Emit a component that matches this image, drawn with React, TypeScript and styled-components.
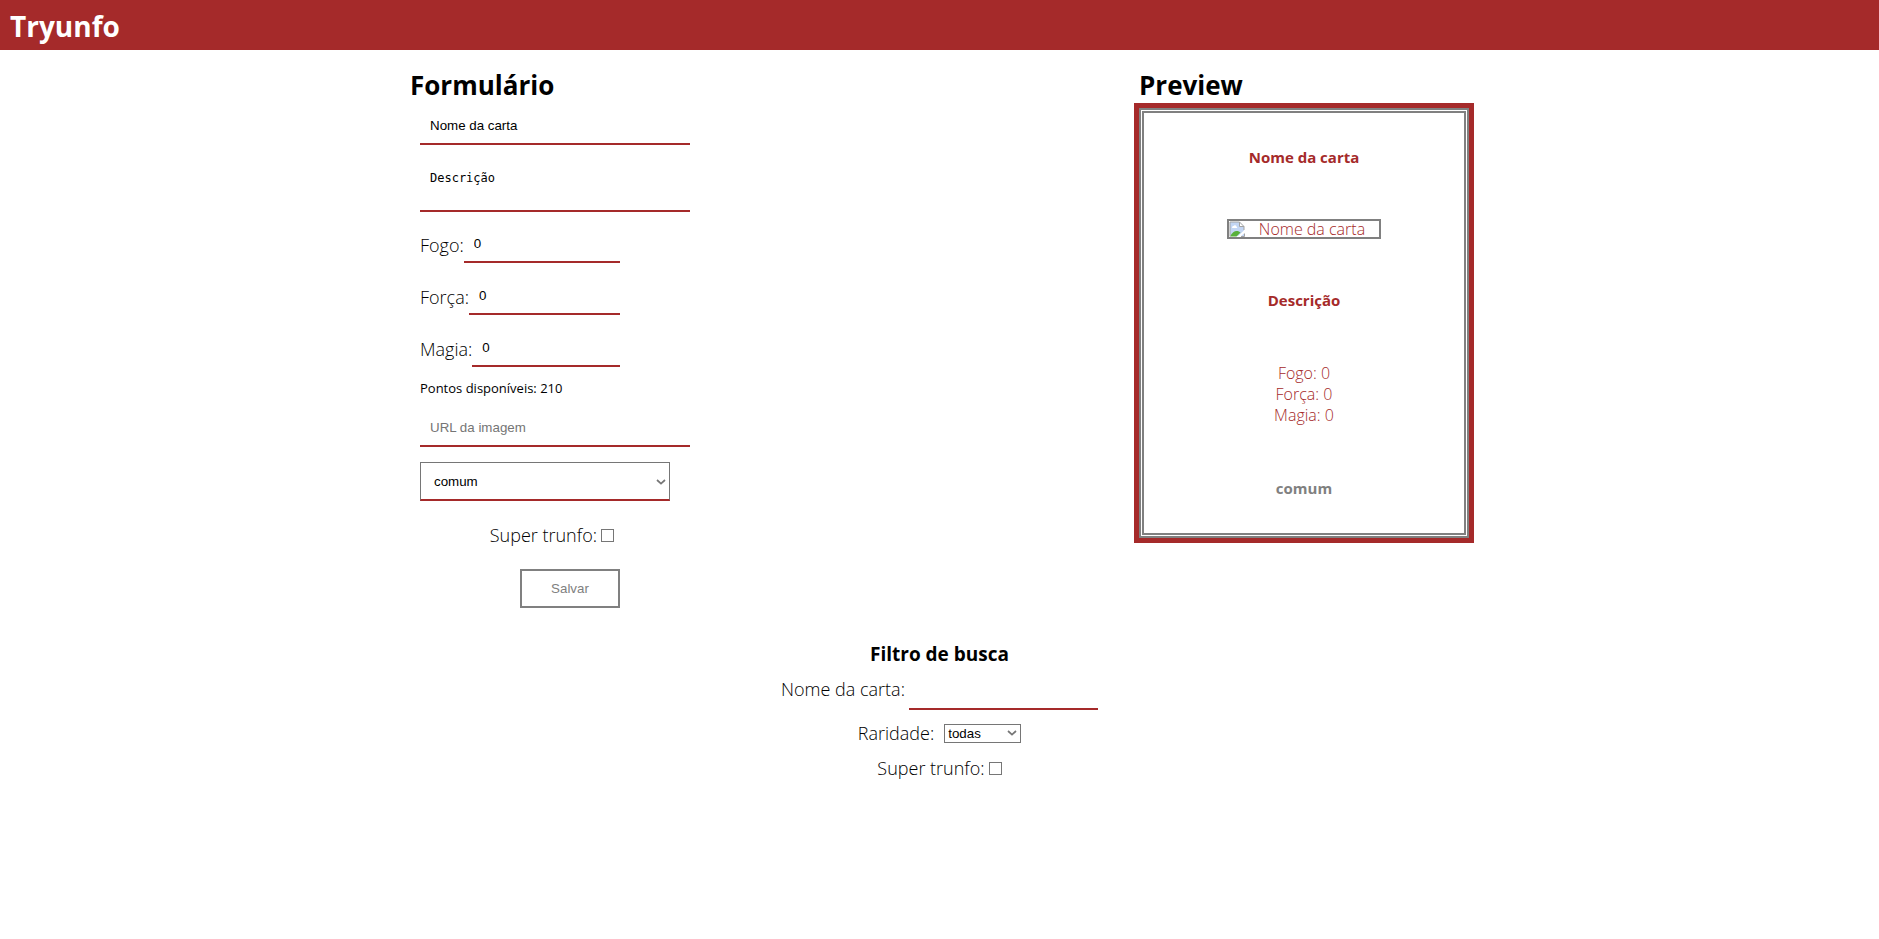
import React, { useState } from 'react';
import styled, { createGlobalStyle } from 'styled-components';

const brand = 'brown';
const uiFont = "'Segoe UI', 'Open Sans', 'Noto Sans', sans-serif";
const controlFont = "Arial, 'Liberation Sans', sans-serif";

const GlobalStyle = createGlobalStyle`
  * {
    box-sizing: border-box;
    margin: 0;
    padding: 0;
  }
  body {
    background: white;
    color: black;
    font-family: ${uiFont};
    font-weight: 300;
    font-size: 18px;
    line-height: 24px;
  }
`;

const Header = styled.header`
  display: flex;
  align-items: center;
  height: 50px;
  padding: 2px 10px 0;
  background: ${brand};
  color: white;
`;

const Logo = styled.h1`
  font-size: 28px;
  line-height: 40px;
  font-weight: 700;
`;

const Columns = styled.main`
  display: flex;
  flex-wrap: wrap;
  justify-content: space-evenly;
  align-items: flex-start;
  padding-top: 17px;
`;

const SectionTitle = styled.h2`
  padding: 0 5px;
  font-size: 26px;
  line-height: 36px;
  font-weight: 700;
`;

const FormSection = styled.section`
  width: 324px;
`;

const Form = styled.form`
  display: flex;
  flex-direction: column;
  align-items: flex-start;
  padding: 4px 0 0 15px;
`;

const underline = `
  border: none;
  border-bottom: 2px solid ${brand};
  border-radius: 0;
  background: white;
  color: black;
  outline: none;
`;

const TextInput = styled.input`
  ${underline}
  width: 270px;
  height: 38px;
  padding: 0 10px;
  font-family: ${controlFont};
  &::placeholder {
    color: #757575;
  }
`;

const Description = styled.textarea`
  ${underline}
  width: 270px;
  height: 52px;
  margin: 15px 0 14px;
  padding: 10px;
  resize: none;
  overflow: hidden;
  font-family: Consolas, 'DejaVu Sans Mono', monospace;
  font-size: 12px;
  line-height: 16px;
`;

const AttributeRow = styled.label`
  display: flex;
  align-items: center;
  width: 200px;
  height: 37px;
  margin-bottom: 15px;
`;

const NumberInput = styled(TextInput)`
  flex: 1;
  width: auto;
  min-width: 0;
  height: 37px;
  appearance: textfield;
`;

const Points = styled.p`
  margin: -6px 0 9px;
  font-size: 13px;
  line-height: 24px;
  font-weight: 400;
`;

const SelectBox = styled.span<{ $wide?: boolean }>`
  position: relative;
  display: flex;
  width: ${({ $wide }) => ($wide ? 250 : 77)}px;
  margin-top: ${({ $wide }) => ($wide ? 15 : 0)}px;

  svg {
    position: absolute;
    top: 50%;
    right: 4px;
    transform: translateY(-50%);
    pointer-events: none;
  }
`;

const Select = styled.select<{ $wide?: boolean }>`
  appearance: none;
  width: 100%;
  height: ${({ $wide }) => ($wide ? 39 : 19)}px;
  padding: 0 ${({ $wide }) => ($wide ? 13 : 3)}px;
  border: 1px solid #767676;
  ${({ $wide }) => $wide && `border-bottom: 2px solid ${brand};`}
  border-radius: 0;
  background: white;
  color: black;
  font-family: ${controlFont};
`;

const CheckLabel = styled.label`
  display: flex;
  align-items: center;
  gap: 4px;
`;

const Checkbox = styled.input`
  appearance: none;
  width: 13px;
  height: 13px;
  border: 1px solid #767676;
  background: white;
  &:checked {
    background: ${brand};
  }
`;

const FormFooter = styled.div`
  display: flex;
  flex-direction: column;
  align-items: flex-end;
  gap: 22px;
  width: 200px;
  padding-top: 22px;

  ${CheckLabel} {
    padding-right: 6px;
  }
`;

const SaveButton = styled.button`
  width: 100px;
  height: 39px;
  border: 2px solid gray;
  background: white;
  color: gray;
  font-family: ${controlFont};
`;

const Card = styled.article`
  width: 340px;
  border: 5px solid ${brand};
  color: ${brand};
  font-size: 16px;
  line-height: 21px;
  text-align: center;
`;

const CardInner = styled.div`
  display: flex;
  flex-direction: column;
  align-items: center;
  gap: 51px;
  padding: 34px 20px;
  border: 5px double gray;
`;

const CardStrong = styled.h3<{ $muted?: boolean }>`
  font-size: 15px;
  line-height: 21px;
  font-weight: 700;
  color: ${({ $muted }) => ($muted ? 'gray' : brand)};
`;

const CardImage = styled.div`
  display: flex;
  align-items: center;
  width: 154px;
  height: 20px;
  border: 2px solid gray;
  overflow: hidden;

  span {
    flex: 1;
    line-height: 16px;
  }
`;

const Stats = styled.ul`
  padding: 1px 0;
  list-style: none;
`;

const Filters = styled.section`
  display: flex;
  flex-direction: column;
  align-items: center;
  padding: 32px 0;
`;

const FilterTitle = styled.h3`
  font-size: 19px;
  line-height: 28px;
  font-weight: 700;
`;

const FilterRow = styled.label<{ $gap: number }>`
  display: flex;
  align-items: center;
  gap: ${({ $gap }) => $gap}px;
  margin-bottom: 11px;
`;

const FilterInput = styled(TextInput)`
  width: 189px;
  height: 42px;
`;

const Chevron = () => (
  <svg width="10" height="6" viewBox="0 0 10 6" fill="none" stroke="#767676" strokeWidth="1.7" aria-hidden="true">
    <path d="M1 1l4 3.600L9 1" />
  </svg>
);

const BrokenImage = () => (
  <svg width="16" height="16" viewBox="0 0 16 16" aria-hidden="true">
    <path d="M1 1h9.500l4.500 4.500V15H1z" fill="#c3d6f4" />
    <path d="M3 6.500c0-1 .8-1.500 1.500-1.500.4-1 2.500-1 2.800.4.900 0 1.400 1.600.3 1.600H3.400z" fill="white" />
    <path d="M1 15.500c2-4 4.500-5.500 6.500-5.500s3 .6 4 1.500L7.500 15.500z" fill="#59b13a" />
    <path d="M16 8.500L8 16h3l5-4.500z" fill="white" />
    <path d="M10.500 1v4.500H15z" fill="white" />
    <path d="M1 15.500V1h9.500L15 5.500V9M10.500 1v4.500H15M15.500 12.500V15.500H12" fill="none" stroke="#a3a3a3" />
  </svg>
);

const rarities = ['comum', 'normal', 'raro', 'muito raro'];

export default function App() {
  const [name, setName] = useState('Nome da carta');
  const [description, setDescription] = useState('Descrição');
  const [rarity, setRarity] = useState('comum');
  const [attributes, setAttributes] = useState<Record<string, string>>({ Fogo: '0', Força: '0', Magia: '0' });
  const points = 210 - Object.values(attributes).reduce((sum, v) => sum + Number(v), 0);

  return (
    <>
      <GlobalStyle />
      <Header>
        <Logo>Tryunfo</Logo>
      </Header>
      <Columns>
        <FormSection>
          <SectionTitle>Formulário</SectionTitle>
          <Form onSubmit={(e) => e.preventDefault()}>
            <TextInput aria-label="Nome da carta" value={name} onChange={(e) => setName(e.target.value)} />
            <Description
              aria-label="Descrição"
              value={description}
              onChange={(e) => setDescription(e.target.value)}
            />
            {Object.entries(attributes).map(([label, value]) => (
              <AttributeRow key={label}>
                {label}:
                <NumberInput
                  type="number"
                  value={value}
                  onChange={(e) => setAttributes({ ...attributes, [label]: e.target.value })}
                />
              </AttributeRow>
            ))}
            <Points>Pontos disponíveis: {points}</Points>
            <TextInput aria-label="URL da imagem" placeholder="URL da imagem" />
            <SelectBox $wide>
              <Select $wide aria-label="Raridade" value={rarity} onChange={(e) => setRarity(e.target.value)}>
                {rarities.map((r) => (
                  <option key={r}>{r}</option>
                ))}
              </Select>
              <Chevron />
            </SelectBox>
            <FormFooter>
              <CheckLabel>
                Super trunfo:
                <Checkbox type="checkbox" />
              </CheckLabel>
              <SaveButton type="submit" disabled>
                Salvar
              </SaveButton>
            </FormFooter>
          </Form>
        </FormSection>
        <section>
          <SectionTitle>Preview</SectionTitle>
          <Card>
            <CardInner>
              <CardStrong>{name}</CardStrong>
              <CardImage>
                <BrokenImage />
                <span>{name}</span>
              </CardImage>
              <CardStrong>{description}</CardStrong>
              <Stats>
                {Object.entries(attributes).map(([label, value]) => (
                  <li key={label}>
                    {label}: {value}
                  </li>
                ))}
              </Stats>
              <CardStrong $muted>{rarity}</CardStrong>
            </CardInner>
          </Card>
        </section>
      </Columns>
      <Filters>
        <FilterTitle>Filtro de busca</FilterTitle>
        <FilterRow $gap={4}>
          Nome da carta:
          <FilterInput type="text" />
        </FilterRow>
        <FilterRow $gap={10}>
          Raridade:
          <SelectBox>
            <Select>
              <option>todas</option>
              {rarities.map((r) => (
                <option key={r}>{r}</option>
              ))}
            </Select>
            <Chevron />
          </SelectBox>
        </FilterRow>
        <CheckLabel>
          Super trunfo:
          <Checkbox type="checkbox" />
        </CheckLabel>
      </Filters>
    </>
  );
}
